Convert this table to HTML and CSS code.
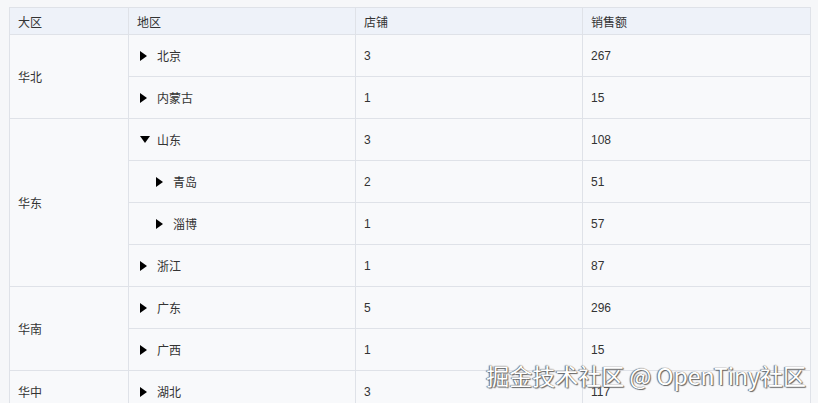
FILE: index.html
```html
<!DOCTYPE html>
<html lang="zh">
<head>
<meta charset="utf-8">
<link rel="stylesheet" href="styles.css">
</head>
<body>
<div class="page">
  <table class="grid">
    <colgroup>
      <col class="c1"><col class="c2"><col class="c3"><col class="c4">
    </colgroup>
    <thead>
      <tr><th>大区</th><th>地区</th><th>店铺</th><th>销售额</th></tr>
    </thead>
    <tbody>
      <tr><td rowspan="2">华北</td><td><span class="tree"><i class="tri right"></i>北京</span></td><td>3</td><td>267</td></tr>
      <tr><td><span class="tree"><i class="tri right"></i>内蒙古</span></td><td>1</td><td>15</td></tr>
      <tr><td rowspan="4">华东</td><td><span class="tree"><i class="tri down"></i>山东</span></td><td>3</td><td>108</td></tr>
      <tr><td><span class="tree lvl2"><i class="tri right"></i>青岛</span></td><td>2</td><td>51</td></tr>
      <tr><td><span class="tree lvl2"><i class="tri right"></i>淄博</span></td><td>1</td><td>57</td></tr>
      <tr><td><span class="tree"><i class="tri right"></i>浙江</span></td><td>1</td><td>87</td></tr>
      <tr><td rowspan="2">华南</td><td><span class="tree"><i class="tri right"></i>广东</span></td><td>5</td><td>296</td></tr>
      <tr><td><span class="tree"><i class="tri right"></i>广西</span></td><td>1</td><td>15</td></tr>
      <tr><td>华中</td><td><span class="tree"><i class="tri right"></i>湖北</span></td><td>3</td><td>117</td></tr>
    </tbody>
  </table>
  <div class="watermark">掘金技术社区 @ OpenTiny社区</div>
</div>
</body>
</html>
```
FILE: styles.css
```css
html, body {
  margin: 0;
  padding: 0;
  background: #f6f7f9;
  overflow: hidden;
}
.page {
  position: relative;
  width: 818px;
  height: 403px;
  padding: 7px 0 0 9px;
  box-sizing: border-box;
  font-family: "Liberation Sans", "Noto Sans CJK SC", sans-serif;
  font-size: 12px;
  color: #333;
}
.grid {
  border-collapse: collapse;
  table-layout: fixed;
  width: 801px;
  background: #f8f9fb;
}
.c1 { width: 119px; }
.c2 { width: 227px; }
.c3 { width: 227px; }
.c4 { width: 228px; }
.grid th, .grid td {
  border: 1px solid #dfe2e8;
  text-align: left;
  padding: 0 8px;
  font-weight: normal;
  white-space: nowrap;
}
.grid th {
  height: 26px;
  background: #eef2f9;
}
.grid td {
  height: 41px;
}
.tree {
  display: flex;
  align-items: center;
  padding-left: 3px;
}
.tree.lvl2 { padding-left: 19px; }
.tri {
  display: inline-block;
  width: 0;
  height: 0;
  margin-right: 10px;
}
.tri.right {
  border-top: 5px solid transparent;
  border-bottom: 5px solid transparent;
  border-left: 7px solid #000;
}
.tri.down {
  border-left: 5px solid transparent;
  border-right: 5px solid transparent;
  border-top: 7px solid #000;
  margin-right: 7px;
}
.watermark {
  position: absolute;
  right: 12px;
  bottom: 14px;
  font-family: "Noto Sans CJK SC", sans-serif;
  font-size: 23px;
  line-height: 28px;
  color: #fff;
  text-shadow: 0 0 1px #555, 1px 1px 1px #666, -1px 0 1px #777;
}
```
